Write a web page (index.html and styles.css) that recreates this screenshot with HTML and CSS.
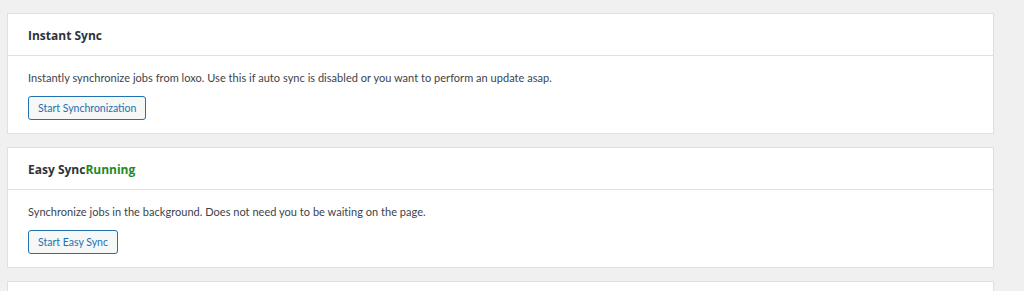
FILE: index.html
```html
<!DOCTYPE html>
<html lang="en">
<head>
    <meta charset="UTF-8">
    <title>Sync</title>
    <link rel="stylesheet" href="styles.css">
</head>
<body>
    <div class="wrap">
        <div class="postbox">
            <div class="postbox-header">
                <h2>Instant Sync</h2>
            </div>
            <div class="inside">
                <p>Instantly synchronize jobs from loxo. Use this if auto sync is disabled or you want to perform an update asap.</p>
                <button class="button">Start Synchronization</button>
            </div>
        </div>

        <div class="postbox">
            <div class="postbox-header">
                <h2>Easy Sync<span class="status">Running</span></h2>
            </div>
            <div class="inside">
                <p>Synchronize jobs in the background. Does not need you to be waiting on the page.</p>
                <button class="button">Start Easy Sync</button>
            </div>
        </div>

        <div class="postbox">
            <div class="postbox-header">
                <h2>&nbsp;</h2>
            </div>
        </div>
    </div>
</body>
</html>
```

FILE: styles.css
```css
body {
    margin: 0;
    background: #f0f0f1;
    font-family: "Lato", "Open Sans", sans-serif;
    font-size: 11px;
    color: #3c434a;
}
.wrap {
    padding: 13px 30px 0 7px;
}
.postbox {
    background: #fff;
    border: 1px solid #e0e0e2;
    margin-bottom: 13px;
}
.postbox-header {
    border-bottom: 1px solid #e0e0e2;
    height: 41px;
    display: flex;
    align-items: center;
    padding: 0 20px;
}
.postbox-header h2 {
    margin: 1px 0 0;
    font-family: "Open Sans", sans-serif;
    font-size: 12px;
    font-weight: 700;
    color: #2c3338;
}
.status {
    color: #1e8a1e;
}
.inside {
    padding: 13px 20px 13px;
}
.inside p {
    margin: 0 0 10px;
    line-height: 17px;
    letter-spacing: 0.03px;
}
.button {
    font-family: inherit;
    font-size: 10.5px;
    color: #2271b1;
    background: #f6f7f7;
    border: 1px solid #2271b1;
    border-radius: 3px;
    height: 24px;
    padding: 0 9px;
    cursor: pointer;
}
```
